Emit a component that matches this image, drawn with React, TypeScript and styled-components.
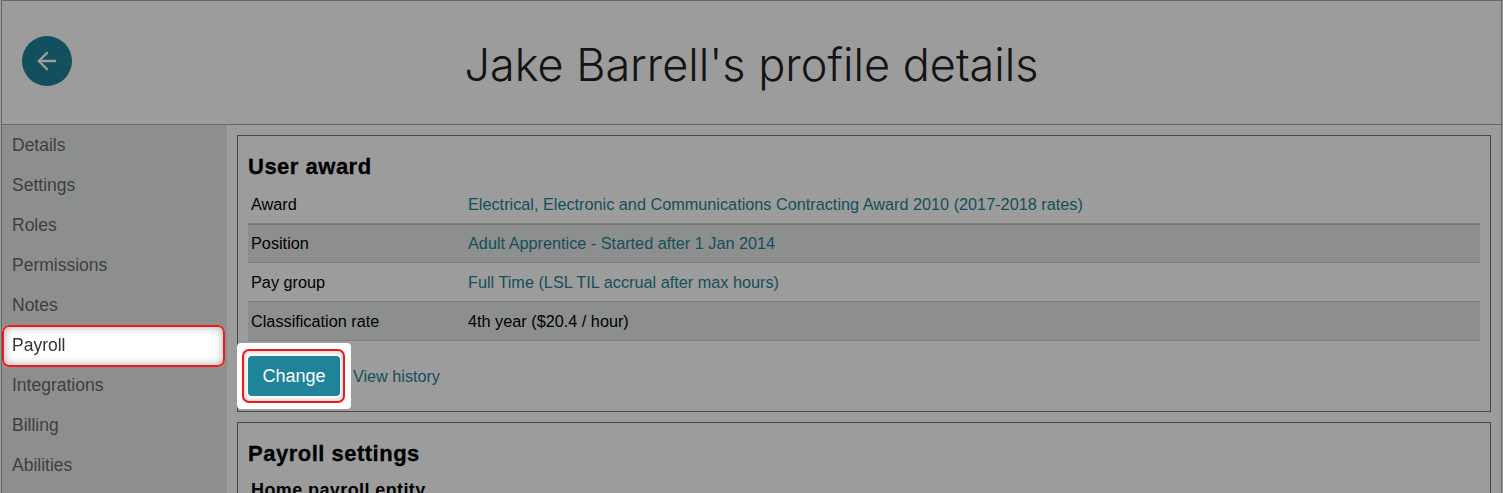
import React from "react";
import styled, { createGlobalStyle } from "styled-components";
import { ArrowLeft } from "lucide-react";

const GlobalStyle = createGlobalStyle`
  html, body {
    margin: 0;
    height: 100%;
    overflow: hidden;
    background: #fff;
    font-family: "Liberation Sans", Arial, sans-serif;
    color: #000;
  }
`;

const Page = styled.div`
  height: 100vh;
  box-sizing: border-box;
  margin: 0 1px;
  border: 1px solid #aaa;
  border-bottom: 0;
  overflow: hidden;
`;

const Overlay = styled.div`
  position: fixed;
  inset: 0;
  z-index: 10;
  background: rgba(0, 0, 0, 0.388);
`;

const Header = styled.header`
  display: grid;
  grid-template-columns: 1fr auto 1fr;
  align-items: center;
  height: 124px;
  box-sizing: border-box;
  padding: 0 20px;
  border-bottom: 1px solid #aaa;
`;

const BackButton = styled.button`
  display: flex;
  align-items: center;
  justify-content: center;
  width: 50px;
  height: 50px;
  margin-top: -3px;
  padding: 0;
  border: 0;
  border-radius: 50%;
  background: #1f8399;
  color: #fff;
`;

const Title = styled.h1`
  margin: 0 0 -5px;
  font-family: Inter, sans-serif;
  font-size: 45px;
  font-weight: 300;
  line-height: 56px;
  color: #222;
`;

const Body = styled.div`
  display: flex;
  height: calc(100% - 124px);
`;

const Sidebar = styled.nav`
  flex: 0 0 225px;
  background: #e7eae9;
`;

const NavItem = styled.div<{ $active?: boolean }>`
  position: relative;
  display: flex;
  align-items: center;
  height: 40px;
  padding-left: 10px;
  font-size: 17.5px;
  color: ${(p) => (p.$active ? "#333" : "#686868")};
  ${(p) =>
    p.$active &&
    `
    z-index: 20;
    margin-right: 2px;
    border-radius: 7px;
    background: #fff;
    box-shadow: 0 2px 0 #fff;
    &::after {
      content: "";
      position: absolute;
      inset: 0 0 -2px 0;
      border: 2px solid #f01a1a;
      border-radius: 7px;
      box-shadow: inset 0 0 8px rgba(0, 0, 0, 0.35);
    }
  `}
`;

const Main = styled.main`
  flex: 1;
  min-width: 0;
  padding: 10px 10px 0;
`;

const Card = styled.section`
  margin-bottom: 10px;
  padding: 10px 10px 2px;
  border: 1px solid #777;
`;

const CardTitle = styled.h2`
  margin: 9px 0 0;
  font-size: 22px;
  font-weight: 700;
  line-height: 24px;
  letter-spacing: 0.5px;
  -webkit-text-stroke: 0.3px #000;
`;

const Rows = styled.div`
  margin-top: 6px;
`;

const Row = styled.div<{ $striped?: boolean; $topRule?: boolean }>`
  display: grid;
  grid-template-columns: 217px 1fr;
  align-items: center;
  height: 39px;
  box-sizing: border-box;
  padding-left: 3px;
  border-bottom: 1px solid #ccc;
  border-top: ${(p) => (p.$topRule ? "1px solid #bbb" : "0")};
  background: ${(p) => (p.$striped ? "#e7eae9" : "transparent")};
  font-size: 16.25px;
`;

const RowLink = styled.a`
  color: #1f8399;
`;

const Actions = styled.div`
  display: flex;
  align-items: center;
  gap: 2px;
  margin: 2px 0 0 -11px;
  height: 66px;
`;

const Spotlight = styled.div`
  position: relative;
  z-index: 20;
  display: flex;
  padding: 13px 11px;
  border-radius: 4px;
  background: #fff;
`;

const ChangeButton = styled.button`
  position: relative;
  width: 92px;
  height: 40px;
  padding: 0;
  border: 0;
  border-radius: 4px;
  background: #1f8399;
  color: #fff;
  font-family: inherit;
  font-size: 18px;

  &::after {
    content: "";
    position: absolute;
    inset: -7px -5px -7px -6px;
    border: 2px solid #f01a1a;
    border-radius: 7px;
    box-shadow: inset 0 0 5px rgba(0, 0, 0, 0.3);
  }
`;

const HistoryLink = styled.a`
  font-size: 16.2px;
  color: #1f8399;
`;

const SubTitle = styled.div`
  margin: 14px 0 0 3px;
  font-size: 18px;
  font-weight: 700;
  letter-spacing: 0.4px;
`;

const navItems = [
  "Details",
  "Settings",
  "Roles",
  "Permissions",
  "Notes",
  "Payroll",
  "Integrations",
  "Billing",
  "Abilities",
];

const App: React.FC = () => {
  return (
    <>
      <GlobalStyle />
      <Page>
        <Header>
          <BackButton aria-label="Back">
            <ArrowLeft size={28} strokeWidth={2} />
          </BackButton>
          <Title>Jake Barrell's profile details</Title>
        </Header>
        <Body>
          <Sidebar>
            {navItems.map((item) => (
              <NavItem key={item} $active={item === "Payroll"}>
                {item}
              </NavItem>
            ))}
          </Sidebar>
          <Main>
            <Card>
              <CardTitle>User award</CardTitle>
              <Rows>
                <Row>
                  <span>Award</span>
                  <RowLink>Electrical, Electronic and Communications Contracting Award 2010 (2017-2018 rates)</RowLink>
                </Row>
                <Row $striped $topRule>
                  <span>Position</span>
                  <RowLink>Adult Apprentice - Started after 1 Jan 2014</RowLink>
                </Row>
                <Row>
                  <span>Pay group</span>
                  <RowLink>Full Time (LSL TIL accrual after max hours)</RowLink>
                </Row>
                <Row $striped>
                  <span>Classification rate</span>
                  <span>4th year ($20.4 / hour)</span>
                </Row>
              </Rows>
              <Actions>
                <Spotlight>
                  <ChangeButton>Change</ChangeButton>
                </Spotlight>
                <HistoryLink>View history</HistoryLink>
              </Actions>
            </Card>
            <Card>
              <CardTitle>Payroll settings</CardTitle>
              <SubTitle>Home payroll entity</SubTitle>
            </Card>
          </Main>
        </Body>
        <Overlay />
      </Page>
    </>
  );
};

export default App;
